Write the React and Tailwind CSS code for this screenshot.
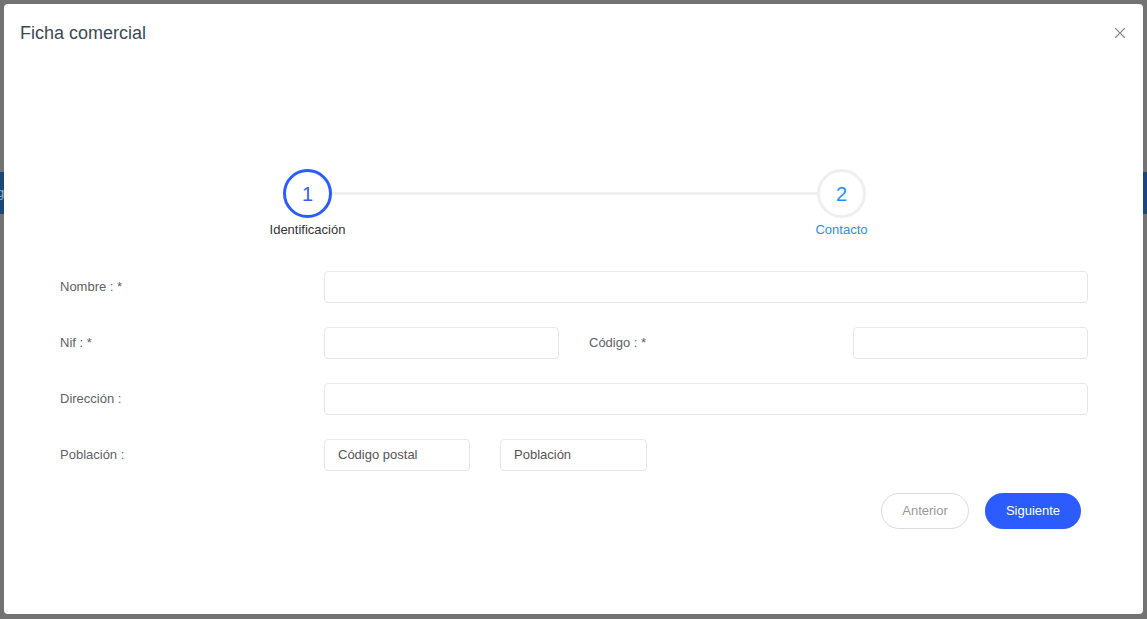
import { X } from "lucide-react";

const font = { fontFamily: '"Liberation Sans", Arial, sans-serif' };

function Field({ className = "", placeholder = "" }) {
  return (
    <input
      placeholder={placeholder}
      className={`h-8 rounded border border-[#e6e6e6] bg-white px-[13px] text-[13px] text-[#555] placeholder:text-[#555] outline-none ${className}`}
    />
  );
}

function Label({ children, className = "" }) {
  return (
    <label className={`text-[13px] text-[#606266] ${className}`}>
      {children}
    </label>
  );
}

export default function App() {
  return (
    <div
      className="relative h-[619px] w-[1147px] overflow-hidden bg-[#737373]"
      style={font}
    >
      {/* page behind the overlay */}
      <div className="absolute left-0 right-0 top-[172px] h-[42px] bg-[#19497a]">
        <span className="ml-[-3px] text-[13px] leading-[42px] text-[#9fb3c8] underline">
          g
        </span>
      </div>

      <div className="absolute left-[4px] top-[4px] flex h-[610px] w-[1139px] flex-col rounded bg-white">
        <div className="flex items-center justify-between pl-4 pr-[14px] pt-[20px]">
          <h2 className="text-[18px] leading-[18px] text-[#3c4a55]">
            Ficha comercial
          </h2>
          <X className="h-[18px] w-[18px] text-[#888]" strokeWidth={1.5} />
        </div>

        {/* steps */}
        <div className="mt-[127px] flex justify-center">
          <div className="flex w-[640px] translate-x-px items-start">
            <div className="flex w-[106px] flex-col items-center">
              <div className="flex h-[49px] w-[49px] items-center justify-center rounded-full border-[3px] border-[#2c5cff] text-[20px] text-[#3b5bff]">
                1
              </div>
              <span className="mt-[2px] text-[13px] text-[#333]">
                Identificación
              </span>
            </div>
            <div className="mx-[-29px] mt-[23px] h-[3px] flex-1 bg-[#efefef]" />
            <div className="flex w-[106px] flex-col items-center">
              <div className="flex h-[49px] w-[49px] items-center justify-center rounded-full border-[3px] border-[#efefef] bg-white text-[20px] text-[#1e90ff]">
                2
              </div>
              <span className="mt-[2px] text-[13px] text-[#1e90ff]">
                Contacto
              </span>
            </div>
          </div>
        </div>

        {/* form */}
        <div className="mt-[31px] flex flex-col gap-6 pl-[56px] pr-[55px]">
          <div className="flex items-center">
            <Label className="w-[264px]">Nombre : *</Label>
            <Field className="flex-1" />
          </div>
          <div className="flex items-center gap-[30px]">
            <div className="flex flex-1 items-center">
              <Label className="w-[264px]">Nif : *</Label>
              <Field className="flex-1 min-w-0" />
            </div>
            <div className="flex flex-1 items-center">
              <Label className="w-[264px]">Código : *</Label>
              <Field className="flex-1 min-w-0" />
            </div>
          </div>
          <div className="flex items-center">
            <Label className="w-[264px]">Dirección :</Label>
            <Field className="flex-1" />
          </div>
          <div className="flex items-center">
            <Label className="w-[264px]">Población :</Label>
            <Field className="w-[146px]" placeholder="Código postal" />
            <Field className="ml-[30px] w-[147px]" placeholder="Población" />
          </div>
        </div>

        <div className="mt-[22px] flex justify-end gap-4 pr-[62px]">
          <button className="h-9 w-[88px] rounded-full border border-[#dcdcdc] bg-white text-[13px] text-[#999]">
            Anterior
          </button>
          <button className="h-9 w-[96px] rounded-full bg-[#2c5cff] text-[13px] text-white">
            Siguiente
          </button>
        </div>
      </div>
    </div>
  );
}
